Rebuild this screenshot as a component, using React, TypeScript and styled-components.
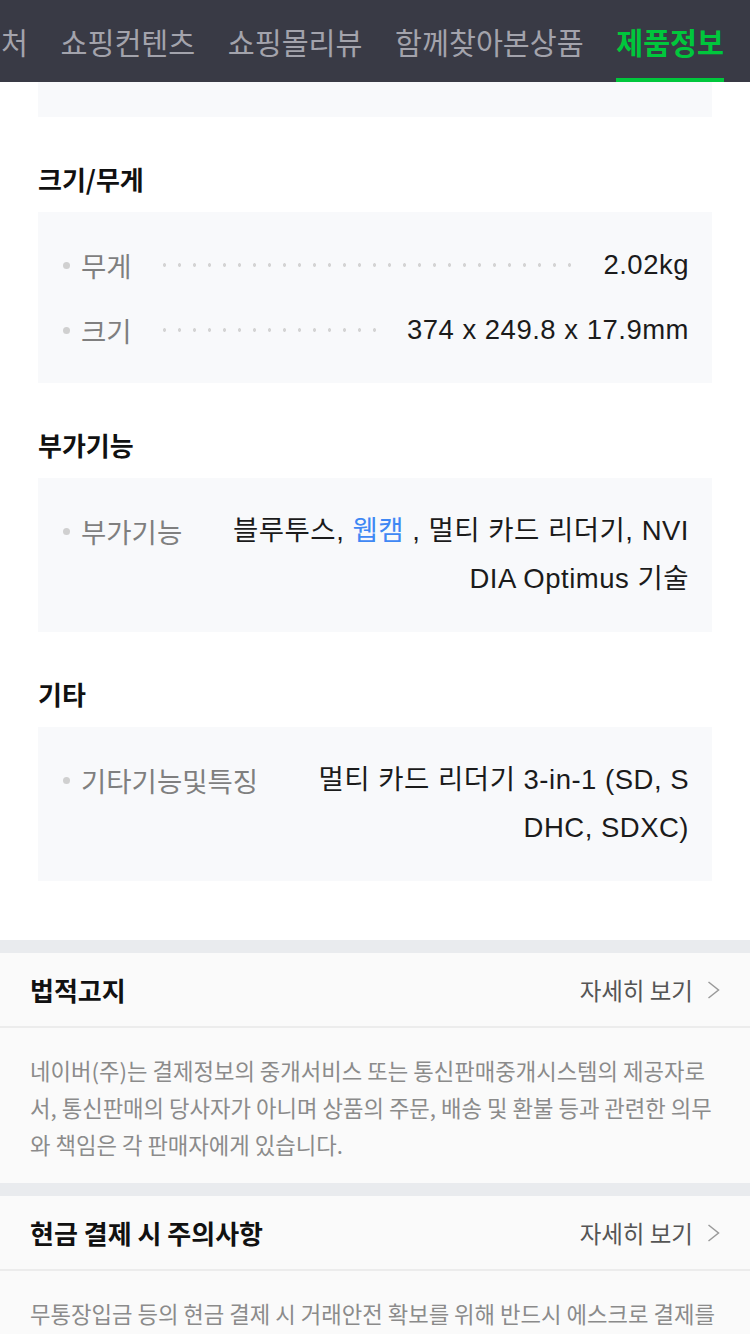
import React from 'react';
import styled, { createGlobalStyle } from 'styled-components';

const GlobalStyle = createGlobalStyle`
  * { box-sizing: border-box; }
  html, body { margin: 0; padding: 0; background: #fff; }
  body {
    font-family: "Noto Sans CJK KR", "Noto Sans", sans-serif;
    -webkit-font-smoothing: antialiased;
  }
`;

const TabBar = styled.nav`
  height: 82px;
  background: #393a45;
  display: flex;
  justify-content: flex-end;
  overflow: hidden;
  padding-right: 26px;
  gap: 32.5px;
`;

const Tab = styled.a<{ $active?: boolean }>`
  flex-shrink: 0;
  height: 82px;
  display: flex;
  align-items: center;
  white-space: nowrap;
  font-size: 29.3px;
  font-weight: ${(p) => (p.$active ? 700 : 400)};
  color: ${(p) => (p.$active ? '#00c73c' : '#a3a3ac')};
  box-shadow: ${(p) => (p.$active ? 'inset 0 -4px 0 #00c73c' : 'none')};
  text-decoration: none;
`;

const Content = styled.main`
  padding: 0 38px 59px;
`;

const TopRemnant = styled.div`
  height: 35px;
  background: #f8f9fb;
`;

const Section = styled.section`
  margin-top: 45px;
`;

const Heading = styled.h3`
  margin: 0 0 16px;
  font-size: 26px;
  line-height: 34px;
  font-weight: 700;
  color: #111;
`;

const SpecBox = styled.ul`
  list-style: none;
  margin: 0;
  padding: 29px 23px 29px 25px;
  background: #f8f9fb;
  display: flex;
  flex-direction: column;
  gap: 17px;
`;

const SpecRow = styled.li`
  display: flex;
  align-items: flex-start;
  font-size: 27.5px;
  line-height: 48px;
`;

const Label = styled.span`
  flex-shrink: 0;
  display: flex;
  align-items: center;
  gap: 11px;
  color: #7f7f7f;
  white-space: nowrap;
  &::before {
    content: '';
    width: 7px;
    height: 7px;
    border-radius: 50%;
    background: #d0d0d0;
  }
`;

const Leader = styled.span`
  flex: 1 1 0;
  min-width: 0;
  margin: 0 20px 0 28px;
  align-self: stretch;
  background-image: radial-gradient(circle, #d4d4d4 1.5px, transparent 2px);
  background-size: 15px 6px;
  background-repeat: repeat-x;
  background-position: -3px center;
`;

const Value = styled.span`
  flex: 0 1 auto;
  min-width: 0;
  text-align: right;
  word-break: break-all;
  letter-spacing: 0.5px;
  color: #1b1b1b;
  font-family: "Liberation Sans", "Noto Sans CJK KR", sans-serif;
`;

const ValueLink = styled.a`
  color: #3f88f4;
  text-decoration: none;
`;

const Notice = styled.section`
  border-top: 13px solid #e9ebee;
  background: #fafafa;
`;

const NoticeHeader = styled.div`
  height: 75px;
  padding: 0 30px;
  display: flex;
  align-items: center;
  justify-content: space-between;
  border-bottom: 2px solid #ececec;
`;

const NoticeTitle = styled.h4`
  margin: 0;
  font-size: 26px;
  font-weight: 700;
  color: #111;
`;

const MoreLink = styled.a`
  display: flex;
  align-items: center;
  gap: 14px;
  font-size: 23.5px;
  color: #555;
  text-decoration: none;
`;

const NoticeBody = styled.p`
  margin: 0;
  padding: 24px 30px 20px;
  font-size: 22.28px;
  line-height: 37px;
  color: #8b8b8b;
  word-break: break-all;
`;

const Chevron = () => (
  <svg width="13" height="18" viewBox="0 0 13 18" aria-hidden="true">
    <polyline points="1.5,1 11.5,9 1.5,17" fill="none" stroke="#9a9a9a" strokeWidth="1.5" />
  </svg>
);

type Spec = { label: string; value: React.ReactNode };

const specGroups: { title: string; specs: Spec[] }[] = [
  {
    title: '크기/무게',
    specs: [
      { label: '무게', value: '2.02kg' },
      { label: '크기', value: '374 x 249.8 x 17.9mm' },
    ],
  },
  {
    title: '부가기능',
    specs: [
      {
        label: '부가기능',
        value: (
          <>
            블루투스, <ValueLink href="#">웹캠</ValueLink> , 멀티 카드 리더기, NVIDIA Optimus 기술
          </>
        ),
      },
    ],
  },
  {
    title: '기타',
    specs: [{ label: '기타기능및특징', value: '멀티 카드 리더기 3-in-1 (SD, SDHC, SDXC)' }],
  },
];

const tabs = ['판매처', '쇼핑컨텐츠', '쇼핑몰리뷰', '함께찾아본상품', '제품정보'];

const notices = [
  {
    title: '법적고지',
    body: '네이버(주)는 결제정보의 중개서비스 또는 통신판매중개시스템의 제공자로서, 통신판매의 당사자가 아니며 상품의 주문, 배송 및 환불 등과 관련한 의무와 책임은 각 판매자에게 있습니다.',
  },
  {
    title: '현금 결제 시 주의사항',
    body: '무통장입금 등의 현금 결제 시 거래안전 확보를 위해 반드시 에스크로 결제를 이용하시고, 판매자와의 직거래는 피해주시기 바랍니다.',
  },
];

export default function App() {
  return (
    <>
      <GlobalStyle />
      <TabBar>
        {tabs.map((t) => (
          <Tab key={t} href="#" $active={t === '제품정보'}>
            {t}
          </Tab>
        ))}
      </TabBar>
      <Content>
        <TopRemnant />
        {specGroups.map((g) => (
          <Section key={g.title}>
            <Heading>{g.title}</Heading>
            <SpecBox>
              {g.specs.map((s) => (
                <SpecRow key={s.label}>
                  <Label>{s.label}</Label>
                  <Leader />
                  <Value>{s.value}</Value>
                </SpecRow>
              ))}
            </SpecBox>
          </Section>
        ))}
      </Content>
      {notices.map((n) => (
        <Notice key={n.title}>
          <NoticeHeader>
            <NoticeTitle>{n.title}</NoticeTitle>
            <MoreLink href="#">
              자세히 보기
              <Chevron />
            </MoreLink>
          </NoticeHeader>
          <NoticeBody>{n.body}</NoticeBody>
        </Notice>
      ))}
    </>
  );
}
